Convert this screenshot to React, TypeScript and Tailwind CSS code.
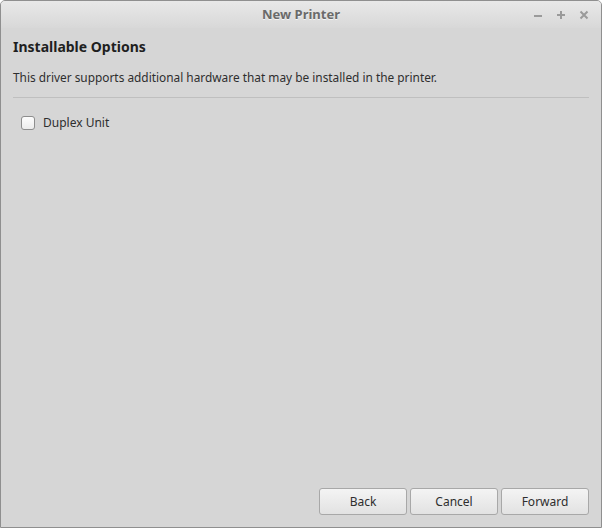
import React from 'react';

const App: React.FC = () => {
  return (
    <div
      className="w-[602px] h-[528px] flex flex-col bg-[#d6d6d6] border border-[#8f8f8f] rounded-t-[5px] overflow-hidden text-[#2e2e2e]"
      style={{ fontFamily: '"Noto Sans", "Open Sans", sans-serif' }}
    >
      {/* Title bar */}
      <div className="relative h-[27px] flex items-center justify-center bg-gradient-to-b from-[#e8e8e8] to-[#d8d8d8] shrink-0">
        <span className="text-[13px] font-bold text-[#6a6a6a] [text-shadow:0_1px_0_#f4f4f4]">New Printer</span>
        <div className="absolute right-[12px] top-0 h-full flex items-center gap-[13px] text-[#9a9a9a]">
          <svg width="10" height="10" viewBox="0 0 10 10">
            <rect x="1" y="5" width="8" height="2" fill="currentColor" />
          </svg>
          <svg width="10" height="10" viewBox="0 0 10 10">
            <rect x="1" y="4" width="8" height="2" fill="currentColor" />
            <rect x="4" y="1" width="2" height="8" fill="currentColor" />
          </svg>
          <svg width="10" height="10" viewBox="0 0 10 10">
            <path d="M1.5 1.5 L8.5 8.5 M8.5 1.5 L1.5 8.5" stroke="currentColor" strokeWidth="2" />
          </svg>
        </div>
      </div>

      {/* Content */}
      <div className="flex-1 flex flex-col px-[12px]">
        <h1 className="mt-[9px] text-[14px] font-bold text-[#1f1f1f] leading-[20px]">Installable Options</h1>
        <p className="mt-[11px] text-[11.86px] leading-[18px] text-[#2e2e2e]">
          This driver supports additional hardware that may be installed in the printer.
        </p>
        <div className="mt-[11px] h-px bg-[#bfbfbf]" />
        <label className="mt-[16px] ml-[8px] flex items-center gap-[8px] text-[12px]">
          <span className="w-[14px] h-[14px] rounded-[3px] border border-[#8e8e8e] bg-gradient-to-b from-[#fdfdfd] to-[#ececec]" />
          <span>Duplex Unit</span>
        </label>

        <div className="mt-auto mb-[12px] flex justify-end gap-[3px]">
          {['Back', 'Cancel', 'Forward'].map((label) => (
            <button
              key={label}
              className="w-[88px] h-[27px] rounded-[3px] border border-[#a8a8a8] bg-gradient-to-b from-[#f4f4f4] to-[#e2e2e2] text-[12px] text-[#2e2e2e]"
            >
              {label}
            </button>
          ))}
        </div>
      </div>
    </div>
  );
};

export default App;
